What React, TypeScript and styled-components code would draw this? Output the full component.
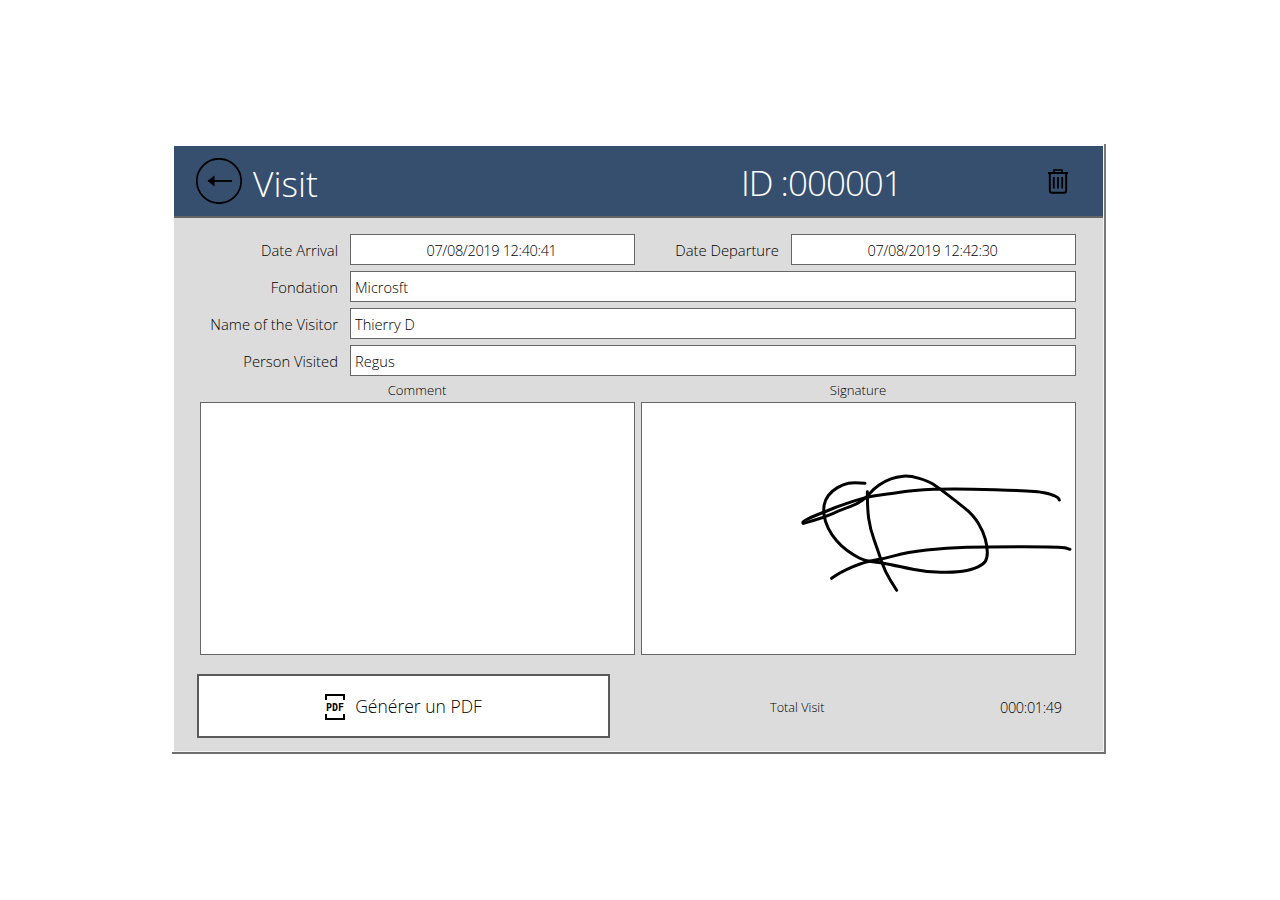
import React from "react";
import styled, { createGlobalStyle } from "styled-components";

const GlobalStyle = createGlobalStyle`
  html, body {
    margin: 0;
    padding: 0;
    background: #fff;
    font-family: "Open Sans", "Noto Sans", sans-serif;
    font-weight: 300;
    color: #000;
  }
`;

const topFields = [
  { label: "Fondation", value: "Microsft" },
  { label: "Name of the Visitor", value: "Thierry D" },
  { label: "Person Visited", value: "Regus" },
];

// signature strokes, as points picked off the reference
const strokes: number[][][] = [
  [[225,55],[190,52],[160,58],[125,78],[105,105],[100,135],[105,170],[125,210],[155,245],[190,270],[225,288],[270,292],[330,305],[415,322],[490,322],[545,315],[580,298],[592,280],[592,245],[580,200],[550,150],[500,110],[445,68],[415,48],[360,32],[320,35],[285,48],[250,72],[232,95],[200,118],[160,132],[100,158],[40,175]],
  [[40,175],[35,172],[60,158],[100,142],[150,122],[232,95],[290,88],[370,76],[490,70],[740,78],[785,88],[805,98],[808,105]],
  [[232,80],[232,130],[240,190],[265,260],[285,320],[320,376]],
  [[125,340],[150,322],[225,290],[280,282],[350,262],[470,248],[590,245],[815,245],[840,253]],
];

const smoothPath = (points: number[][]) => {
  let d = `M${points[0][0]} ${points[0][1]}`;
  for (let i = 1; i < points.length - 1; i++) {
    const [x, y] = points[i];
    const [nx, ny] = points[i + 1];
    d += `Q${x} ${y} ${(x + nx) / 2} ${(y + ny) / 2}`;
  }
  const last = points[points.length - 1];
  return `${d}L${last[0]} ${last[1]}`;
};

const BackIcon = () => (
  <svg width="46" height="46" viewBox="0 0 46 46" fill="none">
    <circle cx="23" cy="23" r="22.2" stroke="#000" strokeWidth="1.7" />
    <path d="M12 23H36" stroke="#000" strokeWidth="1.8" />
    <path d="M11.5 23L18.5 17.5V28.5Z" fill="#000" />
  </svg>
);

const TrashIcon = () => (
  <svg width="22" height="26" viewBox="0 0 22 26" fill="none" stroke="#000">
    <path d="M7 4.5V2H15V4.5" strokeWidth="1.6" />
    <path d="M1 5H21" strokeWidth="2" />
    <path d="M2.8 5V22.5Q2.8 24.8 5 24.8H17Q19.2 24.8 19.2 22.5V5" strokeWidth="1.9" />
    <path d="M6.8 9V20.5M11 9V20.5M15.2 9V20.5" strokeWidth="1.8" />
  </svg>
);

const PdfIcon = () => (
  <PdfSvg width="20" height="26" viewBox="0 0 20 26" fill="none" stroke="#000">
    <path d="M1 6V1H19V6" strokeWidth="2" />
    <path d="M1 20V25H19V20" strokeWidth="2" />
    <text x="1" y="17" fontFamily="DejaVu Sans Mono" fontWeight="700" fontSize="11" textLength="18" lengthAdjust="spacingAndGlyphs" fill="#000" stroke="none">
      PDF
    </text>
  </PdfSvg>
);

const SignatureDrawing = () => (
  <svg width="100%" height="100%" viewBox="0 0 433 251" fill="none">
    <g
      transform="translate(148 62) scale(0.3333)"
      stroke="#000"
      strokeWidth="9"
      strokeLinecap="round"
      strokeLinejoin="round"
    >
      {strokes.map((points, index) => (
        <path key={index} d={smoothPath(points)} />
      ))}
    </g>
  </svg>
);

export default function App() {
  return (
    <>
      <GlobalStyle />
      <Page>
        <Frame>
          <Panel>
            <Header>
              <TitleBlock>
                <BackIcon />
                <Title>Visit</Title>
              </TitleBlock>
              <VisitId>ID :000001</VisitId>
              <TrashSlot>
                <TrashIcon />
              </TrashSlot>
            </Header>
            <Body>
              <FieldGrid>
                <FieldLabel>Date Arrival</FieldLabel>
                <DateInput>07/08/2019 12:40:41</DateInput>
                <FieldLabel>Date Departure</FieldLabel>
                <DateInput>07/08/2019 12:42:30</DateInput>
                {topFields.map((field) => (
                  <React.Fragment key={field.label}>
                    <FieldLabel>{field.label}</FieldLabel>
                    <WideInput>{field.value}</WideInput>
                  </React.Fragment>
                ))}
              </FieldGrid>
              <Notes>
                <NoteColumn>
                  <NoteLabel>Comment</NoteLabel>
                  <NoteBox />
                </NoteColumn>
                <NoteColumn>
                  <NoteLabel>Signature</NoteLabel>
                  <NoteBox>
                    <SignatureDrawing />
                  </NoteBox>
                </NoteColumn>
              </Notes>
              <Footer>
                <PdfButton>
                  <PdfIcon />
                  <span>Générer un PDF</span>
                </PdfButton>
                <TotalLabel>Total Visit</TotalLabel>
                <TotalValue>000:01:49</TotalValue>
              </Footer>
            </Body>
          </Panel>
        </Frame>
      </Page>
    </>
  );
}

const Page = styled.div`
  width: 1280px;
  height: 900px;
  padding: 144px 0 0 172px;
  box-sizing: border-box;
`;

const Frame = styled.div`
  width: 934px;
  box-sizing: border-box;
  padding: 2px 0 0 2px;
  border-right: 2px solid #7a7a7a;
  border-bottom: 2px solid #6e6e6e;
`;

const Panel = styled.div`
  background: #dcdcdc;
  border-right: 1px solid #f4f4f4;
  border-bottom: 1px solid #f4f4f4;
`;

const Header = styled.header`
  height: 70px;
  display: flex;
  align-items: center;
  background: #364f6f;
  border-bottom: 2px solid #666;
  padding-left: 22px;
`;

const TitleBlock = styled.div`
  width: 545px;
  display: flex;
  align-items: center;
  gap: 11px;
`;

const Title = styled.h1`
  margin: 0;
  padding-top: 3px;
  font-size: 35.5px;
  font-weight: 300;
  color: #fff;
`;

const VisitId = styled.div`
  width: 160px;
  padding-top: 3px;
  font-size: 35px;
  letter-spacing: -1px;
  font-weight: 300;
  color: #fff;
  white-space: nowrap;
`;

const TrashSlot = styled.div`
  margin-left: 146px;
  display: flex;
`;

const Body = styled.main`
  height: 533px;
  box-sizing: border-box;
  padding: 16px 0 0 26px;
`;

const FieldGrid = styled.div`
  display: grid;
  grid-template-columns: 138px 285px 132px 285px;
  grid-auto-rows: 31px;
  column-gap: 12px;
  row-gap: 6px;
`;

const FieldLabel = styled.div`
  font-size: 14.8px;
  line-height: 33px;
  text-align: right;
  white-space: nowrap;
`;

const Input = styled.div`
  box-sizing: border-box;
  border: 1px solid #666;
  background: #fff;
  font-size: 14.6px;
  line-height: 31px;
  white-space: nowrap;
`;

const DateInput = styled(Input)`
  text-align: center;
  letter-spacing: -0.38px;
  padding-right: 2px;
`;

const WideInput = styled(Input)`
  grid-column: 2 / span 3;
  padding-left: 4px;
`;

const Notes = styled.div`
  display: grid;
  grid-template-columns: 435px 435px;
  column-gap: 6px;
  margin-top: 5px;
`;

const NoteColumn = styled.div`
  display: flex;
  flex-direction: column;
`;

const NoteLabel = styled.div`
  height: 21px;
  font-size: 13.2px;
  line-height: 18px;
  text-align: center;
  padding-right: 1px;
`;

const NoteBox = styled.div`
  height: 253px;
  box-sizing: border-box;
  border: 1px solid #666;
  background: #fff;
`;

const Footer = styled.div`
  display: flex;
  align-items: center;
  margin: 19px 0 0 -3px;
`;

const PdfButton = styled.div`
  width: 413px;
  height: 64px;
  box-sizing: border-box;
  border: 2px solid #5a5a5a;
  background: #fff;
  display: flex;
  align-items: center;
  justify-content: center;
  gap: 10px;
  font-size: 17.5px;
`;

const PdfSvg = styled.svg`
  margin-top: 1px;
`;

const TotalLabel = styled.div`
  margin-left: 160px;
  width: 230px;
  padding-top: 2px;
  font-size: 12.7px;
`;

const TotalValue = styled.div`
  padding-top: 2px;
  font-size: 14.5px;
  letter-spacing: -0.35px;
`;
